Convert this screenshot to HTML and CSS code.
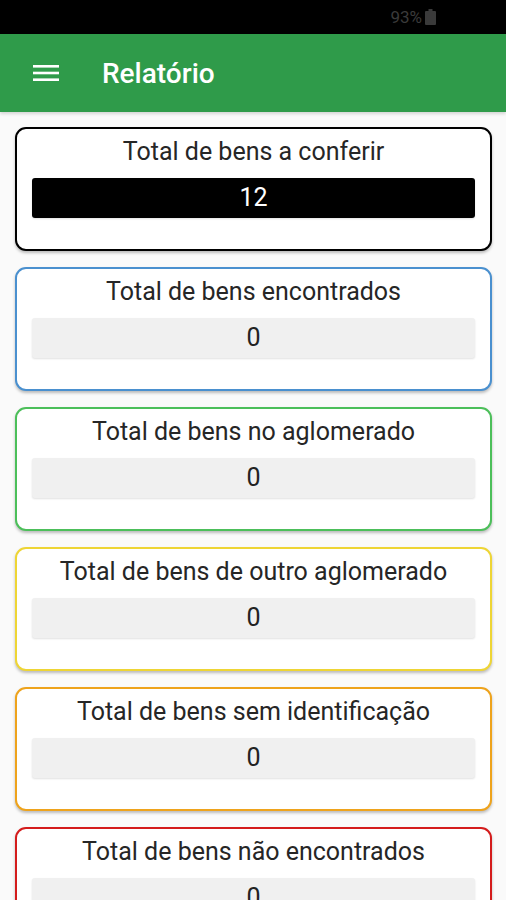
FILE: index.html
```html
<!DOCTYPE html>
<html lang="pt-BR">
    <head>
        <meta charset="UTF-8" />
        <title>Relatório</title>
        <meta name="viewport" content="width=device-width,initial-scale=1.0" />
        <link rel="stylesheet" href="styles.css">
    </head>

    <body>
        <div class="statusBar">
            <span class="battery">93%</span>
            <svg class="batteryIcon" width="11" height="16" viewBox="0 0 11 16">
                <rect x="3.5" y="0" width="4" height="2" fill="#3a3a3a" />
                <rect x="0" y="2" width="11" height="14" rx="1" fill="#3a3a3a" />
            </svg>
        </div>
        <div class="appBar">
            <svg class="menu" width="26" height="18" viewBox="0 0 26 18">
                <rect x="0" y="1" width="26" height="2.6" fill="#fff" />
                <rect x="0" y="7.7" width="26" height="2.6" fill="#fff" />
                <rect x="0" y="14.4" width="26" height="2.6" fill="#fff" />
            </svg>
            <span class="title">Relatório</span>
        </div>

        <div class="content">
            <div class="card black">
                <div class="label">Total de bens a conferir</div>
                <div class="value dark">12</div>
            </div>
            <div class="card blue">
                <div class="label">Total de bens encontrados</div>
                <div class="value">0</div>
            </div>
            <div class="card green">
                <div class="label">Total de bens no aglomerado</div>
                <div class="value">0</div>
            </div>
            <div class="card yellow">
                <div class="label">Total de bens de outro aglomerado</div>
                <div class="value">0</div>
            </div>
            <div class="card orange">
                <div class="label">Total de bens sem identificação</div>
                <div class="value">0</div>
            </div>
            <div class="card red">
                <div class="label">Total de bens não encontrados</div>
                <div class="value">0</div>
            </div>
        </div>
    </body>
</html>
```

FILE: styles.css
```css
body {
    margin: 0px;
    background: #fafafa;
    font-family: Roboto, "Noto Sans", sans-serif;
    overflow: hidden;
    height: 900px;
}

.statusBar {
    height: 34px;
    background: #000;
    display: flex;
    align-items: center;
    justify-content: flex-end;
    padding-right: 70px;
}

.battery {
    color: #3a3a3a;
    font-size: 17px;
    margin-right: 3px;
}

.appBar {
    height: 78px;
    background: #2f9b4a;
    display: flex;
    align-items: center;
    padding-left: 33px;
    box-shadow: 0px 2px 3px rgba(0, 0, 0, 0.15);
}

.menu {
    margin-right: 43px;
}

.title {
    color: #fff;
    font-size: 28px;
    font-weight: 500;
}

.content {
    padding: 15px 14px 0px 15px;
    display: flex;
    flex-direction: column;
    gap: 16px;
}

.card {
    border: 2px solid #000;
    border-radius: 11px;
    background: #fff;
    padding: 8px 15px 31px 15px;
    box-shadow: 0px 2px 3px rgba(0, 0, 0, 0.25);
}

.label {
    text-align: center;
    font-size: 25px;
    line-height: 30px;
    color: #262626;
    margin-bottom: 11px;
    white-space: nowrap;
}

.value {
    height: 40px;
    line-height: 40px;
    text-align: center;
    font-size: 25px;
    color: #222;
    background: #f0f0f0;
    border-radius: 3px;
    box-shadow: 0px 1px 2px rgba(0, 0, 0, 0.12);
}

.value.dark {
    background: #000;
    color: #fff;
}

.black { border-color: #000; }
.blue { border-color: #4a90cf; }
.green { border-color: #4cbf5a; }
.yellow { border-color: #eed535; }
.orange { border-color: #eea31c; }
.red { border-color: #d41c1c; }
```
